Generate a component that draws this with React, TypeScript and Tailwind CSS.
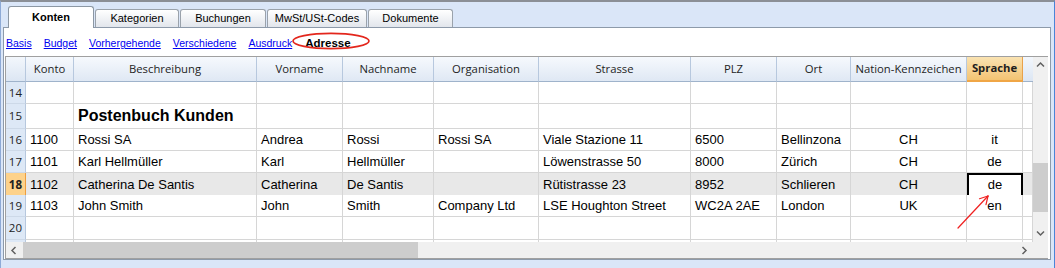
import React from 'react';

const gridCols =
  'grid grid-cols-[20px_48px_183px_86px_91px_105px_152px_86px_74px_116px_56px_10px]';

type Row = {
  n: number;
  h: string;
  title?: string;
  cells?: string[];
  selected?: boolean;
  hideNumber?: boolean;
};

const headers = [
  'Konto',
  'Beschreibung',
  'Vorname',
  'Nachname',
  'Organisation',
  'Strasse',
  'PLZ',
  'Ort',
  'Nation-Kennzeichen',
];

const rows: Row[] = [
  { n: 14, h: 'h-[22px]' },
  { n: 15, h: 'h-[25px]', title: 'Postenbuch Kunden' },
  {
    n: 16,
    h: 'h-[22px]',
    cells: ['1100', 'Rossi SA', 'Andrea', 'Rossi', 'Rossi SA', 'Viale Stazione 11', '6500', 'Bellinzona', 'CH', 'it'],
  },
  {
    n: 17,
    h: 'h-[22px]',
    cells: ['1101', 'Karl Hellmüller', 'Karl', 'Hellmüller', '', 'Löwenstrasse 50', '8000', 'Zürich', 'CH', 'de'],
  },
  {
    n: 18,
    h: 'h-[22px]',
    selected: true,
    cells: ['1102', 'Catherina De Santis', 'Catherina', 'De Santis', '', 'Rütistrasse 23', '8952', 'Schlieren', 'CH', 'de'],
  },
  {
    n: 19,
    h: 'h-[22px]',
    cells: ['1103', 'John Smith', 'John', 'Smith', 'Company Ltd', 'LSE Houghton Street', 'WC2A 2AE', 'London', 'UK', 'en'],
  },
  { n: 20, h: 'h-[23px]' },
  // only the top pixels of row 21 peek out above the scrollbar
  { n: 21, h: 'h-[22px]', hideNumber: true },
];

const tabs = ['Konten', 'Kategorien', 'Buchungen', 'MwSt/USt-Codes', 'Dokumente'];
const tabWidths = ['w-[86px]', 'w-[84px]', 'w-[86px]', 'w-[100px]', 'w-[85px]'];
const links = ['Basis', 'Budget', 'Vorhergehende', 'Verschiedene', 'Ausdruck'];

const Chevron = ({ dir }: { dir: 'up' | 'down' | 'left' | 'right' }) => {
  const pts = {
    up: '1,5.5 4.5,2 8,5.5',
    down: '1,2.5 4.5,6 8,2.5',
    left: '5.5,1 2,4.5 5.5,8',
    right: '2.5,1 6,4.5 2.5,8',
  }[dir];
  return (
    <svg width="9" height="9" viewBox="0 0 9 9">
      <polyline points={pts} fill="none" stroke="#606060" strokeWidth="1.5" />
    </svg>
  );
};

const cellBase =
  'border-r border-b border-[#d6d6d6] flex items-center whitespace-nowrap overflow-hidden';

const DataRow = ({ row }: { row: Row }) => {
  const bg = row.selected ? 'bg-[#e8e8e8]' : 'bg-white';
  return (
    <div className={`${gridCols} ${row.h} shrink-0 ${bg} font-['Liberation_Sans',Arial,sans-serif] text-[13px] text-black`}>
      {row.selected ? (
        <div className="flex items-center justify-end pr-[3px] bg-[#fdd28b] border-r border-r-[#ee9e3e] border-b border-[#e6c28a] font-['Open_Sans',sans-serif] text-[11.5px] font-bold text-[#222]">
          {row.n}
        </div>
      ) : (
        <div className="flex items-center justify-end pr-[3px] bg-[#dde8f6] border-r border-r-[#b7c8de] border-b border-[#cdd9e8] font-['Open_Sans',sans-serif] text-[11.5px] text-[#222]">
          {row.hideNumber ? '' : row.n}
        </div>
      )}
      {Array.from({ length: 11 }).map((_, i) => {
        const v = row.cells ? row.cells[i] ?? '' : '';
        if (i === 1 && row.title) {
          return (
            <div key={i} className={`${cellBase} px-1 text-[16px] font-bold`}>
              {row.title}
            </div>
          );
        }
        if (i === 9 && row.selected) {
          return (
            <div key={i} className="border-2 border-black bg-white flex items-center justify-center">
              {v}
            </div>
          );
        }
        const center = i === 8 || i === 9;
        return (
          <div key={i} className={`${cellBase} ${center ? 'justify-center' : 'px-1'}`}>
            {v}
          </div>
        );
      })}
    </div>
  );
};

const App = () => {
  return (
    <div className="relative w-[1055px] h-[268px] overflow-hidden bg-[#dae6f8] border-t-2 border-t-[#8b8f96] border-l border-l-[#8eaad6] border-r border-r-[#4a84d8] pl-[2px] pr-[3px] flex flex-col">
      {/* tab strip */}
      <div className="h-[25px] shrink-0 flex items-end gap-[1px] pl-[5px] font-['Liberation_Sans',Arial,sans-serif] text-[11px] text-black">
        {tabs.map((t, i) =>
          i === 0 ? (
            <div
              key={t}
              className={`relative z-10 -mb-[1px] h-[22px] ${tabWidths[i]} bg-white border border-b-0 border-[#8c97a3] rounded-t-[3px] flex items-center justify-center font-bold pb-[1px]`}
            >
              {t}
            </div>
          ) : (
            <div
              key={t}
              className={`h-[18px] ${tabWidths[i]} bg-gradient-to-b from-white to-[#e2e6ec] border border-b-0 border-[#9aa2ab] rounded-t-[3px] flex items-center justify-center`}
            >
              {t}
            </div>
          )
        )}
      </div>

      {/* panel */}
      <div className="h-[233px] shrink-0 bg-white border border-[#8d9aaa] pl-[1px] pr-[2px] flex flex-col">
        <div className="h-[28px] shrink-0 flex items-center gap-3 pl-[1px] pt-[4px] font-['Liberation_Sans',Arial,sans-serif] text-[10.5px]">
          {links.map((l) => (
            <span key={l} className="text-[#0000f0] underline">
              {l}
            </span>
          ))}
          <span className="relative ml-[1px] text-[11.5px] font-bold text-black">
            Adresse
            <svg className="absolute left-[-13px] top-[-3px]" width="79" height="18" viewBox="0 0 79 18">
              <ellipse cx="39" cy="9" rx="38" ry="7.6" fill="none" stroke="#e3261c" strokeWidth="1.7" />
            </svg>
          </span>
        </div>

        {/* grid */}
        <div className="h-[203px] shrink-0 flex flex-col border-t border-l border-b border-[#a0a0a0]">
          <div className="h-[185px] shrink-0 flex">
            <div className="w-[1027px] overflow-hidden flex flex-col">
              <div className={`${gridCols} h-[25px] shrink-0 font-['Open_Sans',sans-serif] text-[11.3px] text-[#1e1e1e]`}>
                <div className="bg-gradient-to-b from-[#f3f7fc] to-[#dce6f3] border-r border-[#b7c8de] border-b border-b-[#9fb3cb]" />
                {headers.map((h) => (
                  <div
                    key={h}
                    className="bg-gradient-to-b from-[#f6f9fd] to-[#dfe8f4] border-r border-[#b7c8de] border-b border-b-[#9fb3cb] flex items-center justify-center whitespace-nowrap"
                  >
                    {h}
                  </div>
                ))}
                <div className="bg-gradient-to-b from-[#fae3b2] to-[#f3c372] border-r border-[#e9a24a] border-b-2 border-b-[#f0a646] flex items-center justify-center font-bold">
                  Sprache
                </div>
                <div className="bg-gradient-to-b from-[#f3f7fc] to-[#dce6f3] border-b border-b-[#9fb3cb]" />
              </div>
              {rows.map((r) => (
                <DataRow key={r.n} row={r} />
              ))}
            </div>
            <div className="w-[15px] bg-[#f0f0f0] flex flex-col">
              <div className="h-[17px] shrink-0 flex items-center justify-center">
                <Chevron dir="up" />
              </div>
              <div className="flex-1 flex flex-col">
                <div className="h-[89px] shrink-0" />
                <div className="h-[49px] shrink-0 bg-[#cdcdcd]" />
              </div>
              <div className="h-[17px] shrink-0 flex items-center justify-center">
                <Chevron dir="down" />
              </div>
            </div>
          </div>
          <div className="h-[16px] shrink-0 flex bg-[#f0f0f0]">
            <div className="w-[17px] flex items-center justify-center">
              <Chevron dir="left" />
            </div>
            <div className="w-[395px] bg-[#cdcdcd]" />
            <div className="flex-1" />
            <div className="w-[17px] flex items-center justify-center">
              <Chevron dir="right" />
            </div>
            <div className="w-[15px]" />
          </div>
        </div>
      </div>

      {/* annotation arrow */}
      <svg className="absolute left-[949px] top-[188px]" width="45" height="45" viewBox="0 0 45 45">
        <g stroke="#f02020" strokeWidth="1.2" fill="none" strokeLinecap="round">
          <line x1="8" y1="38" x2="38" y2="6" />
          <line x1="38" y1="6" x2="29.5" y2="8.7" />
          <line x1="38" y1="6" x2="36" y2="14.6" />
        </g>
      </svg>
    </div>
  );
};

export default App;
